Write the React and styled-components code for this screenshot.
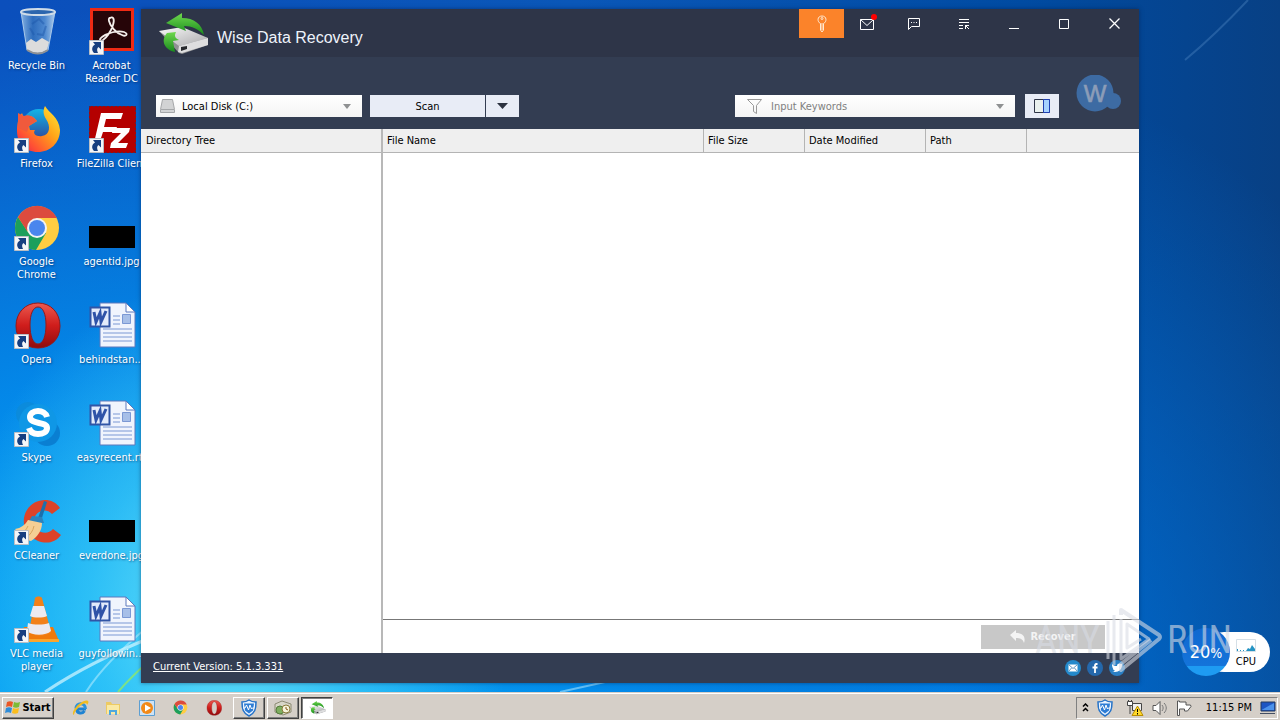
import React from 'react';
import styled, { createGlobalStyle, css } from 'styled-components';

const GlobalStyle = createGlobalStyle`
  * {
    box-sizing: border-box;
  }

  body {
    margin: 0;
    font-family: 'DejaVu Sans Condensed', 'DejaVu Sans', sans-serif;
    font-size: 11px;
    line-height: 13px;
    color: #000;
  }

  button, input, select {
    font: inherit;
    color: inherit;
    margin: 0;
    padding: 0;
    border: 0;
    border-radius: 0;
  }

  svg {
    display: block;
    flex-shrink: 0;
  }
`;

/* ---------- desktop icons ---------- */

const RecycleBin = () => (
  <svg width="48" height="48" viewBox="0 0 48 48">
    <defs>
      <linearGradient id="bin" x1="0" x2="1">
        <stop offset="0" stopColor="#9cc4ea" stopOpacity=".85" />
        <stop offset=".35" stopColor="#3c78bd" stopOpacity=".7" />
        <stop offset=".7" stopColor="#6aa0d8" stopOpacity=".7" />
        <stop offset="1" stopColor="#c3dcf2" stopOpacity=".9" />
      </linearGradient>
    </defs>
    <path d="M8 4 L14 42 Q25 49 35 42 L42 4 Z" fill="url(#bin)" stroke="#a9c9ea" />
    <path d="M13 35 L18 31 23 34 29 30 36 34 34 42 Q25 48 14 42 Z" fill="#dcdcdc" />
    <path d="M14 42 Q25 49 35 42" fill="none" stroke="#8d9094" strokeWidth="2" />
    <ellipse cx="25" cy="4" rx="17" ry="3" fill="#2c66ae" stroke="#cfdce8" strokeWidth="2" />
    <path d="M19 16 l7 -5 5 5 M33 18 l-3 9 -6 -1 M21 27 l-4 -7" fill="none" stroke="#1c56a8" strokeWidth="2" opacity=".45" />
  </svg>
);

const Acrobat = () => (
  <svg width="48" height="48" viewBox="0 0 48 48">
    <path d="M2 0h44v43H2z" fill="#ef2a14" />
    <path d="M5 3h38v37H5z" fill="#260508" />
    <path d="M22 10c3-2 5 1 3 7-2 7-7 13-10 15-4 2-4-1-1-3 5-4 16-7 22-5 5 2 2 5-2 3-6-2-12-9-13-14-.5-2 0-3 1-3z" fill="none" stroke="#f5efec" strokeWidth="1.8" />
  </svg>
);

const Firefox = () => (
  <svg width="48" height="48" viewBox="0 0 48 48">
    <defs>
      <linearGradient id="foxTail" x1="1" y1="0" x2="0" y2="1">
        <stop offset="0" stopColor="#ffef3a" />
        <stop offset=".4" stopColor="#ffa518" />
        <stop offset=".75" stopColor="#ff5034" />
        <stop offset="1" stopColor="#e01b50" />
      </linearGradient>
      <linearGradient id="foxGlobe" x1="0" y1="0" x2="0" y2="1">
        <stop offset="0" stopColor="#12b5e8" />
        <stop offset="1" stopColor="#303c96" />
      </linearGradient>
    </defs>
    <circle cx="26" cy="20" r="17" fill="url(#foxGlobe)" />
    <path d="M32 0C36 7 46 11 47 24 47 37 37 46 25 46 12 46 4 37 4 25 4 18 5 12 9 7L11 12C15 9 19 10 21 12L24 15 16 20 17 24 22 24C19 28 24 31 29 30 37 29 38 20 33 13 30 8 30 4 32 0Z" fill="url(#foxTail)" />
    <path d="M5 7L11 10C15 8 19 10 21 12L24 15 16 20 14 26 5 22Z" fill="#f05a3c" />
  </svg>
);

const FileZilla = () => (
  <svg width="48" height="48" viewBox="0 0 48 48">
    <path d="M1 0h47v47H1z" fill="#b40000" />
    <path d="M1 .5h47M1 46.5h47M1.500 0v47M47.500 0v47" stroke="#5b2440" strokeWidth="1" strokeDasharray="2 2" />
    <path d="M13 7h22l-2 6H18l-2 8h13l-2 5H15l-5 15H5z" fill="#fff" />
    <path d="M25 22h17l-1 4-11 11h10l-2 5H22l1-5 10-10h-9z" fill="#fff" />
  </svg>
);

const ChromeArt = ({ size = 48 }) => (
  <svg width={size} height={size} viewBox="1 0 48 48">
    <circle cx="25" cy="24" r="22" fill="#ffcd42" />
    <path d="M6 13 A22 22 0 0 0 24 46 L34 29 L25 24 L16 28 Z" fill="#1c9f5c" />
    <path d="M6 13 A22 22 0 0 1 45 14 L25 14 L15 27 Z" fill="#dc4b3e" />
    <circle cx="25" cy="24" r="10" fill="#f3f3f3" />
    <circle cx="25" cy="24" r="8" fill="#4a86ee" />
  </svg>
);

const OperaArt = ({ size = 48 }) => (
  <svg width={size} height={size} viewBox="0 0 48 48">
    <defs>
      <linearGradient id="opera" x1="0" y1="0" x2="0" y2="1">
        <stop offset="0" stopColor="#ec5a50" />
        <stop offset=".5" stopColor="#cf1d1b" />
        <stop offset="1" stopColor="#8e0c0e" />
      </linearGradient>
    </defs>
    <path fillRule="evenodd" d="M25 1C12 1 3 11 3 24s9 22 22 22 22-9 22-22S38 1 25 1zM25 5c5 0 8 7 8 18s-3 19-8 19-8-8-8-19 3-18 8-18z" fill="url(#opera)" stroke="#93191b" />
  </svg>
);

const Skype = () => (
  <svg width="48" height="48" viewBox="0 0 48 48">
    <circle cx="15" cy="14" r="12" fill="#0b8bdc" />
    <circle cx="34" cy="33" r="13" fill="#0a7fd2" />
    <circle cx="25" cy="23" r="19" fill="#0f97e6" />
    <path d="M34 17c-1-4-5-6-9-6-5 0-8 3-8 6 0 8 17 4 17 11 0 4-4 6-9 6s-8-3-9-6" fill="none" stroke="#fff" strokeWidth="6" />
  </svg>
);

const CCleaner = () => (
  <svg width="48" height="48" viewBox="0 0 48 48">
    <path d="M47 10C38-4 14 1 11 20c-3 20 25 34 37 17l-8-6c-7 8-20 2-19-9 1-9 12-13 18-6z" fill="#dc4329" />
    <path d="M31 3l3 1-6 19h-4z" fill="#1b70ad" />
    <path d="M19 18l10 1 2 6-16 0z" fill="#2b83bd" />
    <path d="M15 22l14 3c0 8-5 14-11 18-6-1-11-6-16-12 6-1 10-4 13-9z" fill="#f5cf94" />
    <path d="M15 28c-2 4-4 7-8 8M21 28c-1 5-4 9-8 12" stroke="#d9a55d" fill="none" />
  </svg>
);

const Vlc = () => (
  <svg width="48" height="48" viewBox="0 0 48 48">
    <path d="M11 31h29l6 14H6z" fill="#f07a0c" />
    <path d="M6 43h40v3H6z" fill="#fba52c" />
    <path d="M22 2c1-2 6-2 7 0l9 34c-4 5-18 5-22 0z" fill="#f2811a" />
    <path d="M20 10h11l3 10c-4 2-13 2-17 0zM15 27c6 2 15 2 21 0l2 8c-5 5-19 5-24 0z" fill="#eceaf0" />
  </svg>
);

const WordDoc = () => (
  <svg width="48" height="48" viewBox="0 0 48 48">
    <path d="M12 1h26l9 9v35H12z" fill="#f0f4fd" stroke="#5c79bd" />
    <path d="M38 1v9h9z" fill="#fff" stroke="#5c79bd" />
    <path d="M15 27h29M15 31h29M15 35h29M15 39h29M25 14h7M25 18h7M25 22h7" stroke="#7b98d4" />
    <path d="M34.500 12.500h8v9h-8z" fill="#a7bfe8" stroke="#7b98d4" />
    <path d="M2.500 5.500h19v19h-19z" fill="#e3ebfb" stroke="#3155a6" strokeWidth="2" />
    <path d="M6 10l2 10 4-9 1 9 5-11" fill="none" stroke="#2f53a8" strokeWidth="3" />
  </svg>
);

const Thumbnail = styled.div`
  width: 46px;
  height: 22px;
  margin: 22px 0 4px;
  background: #000;
`;

const ShortcutArrow = () => (
  <svg width="15" height="15" viewBox="0 0 15 15">
    <path d="M.5.5h14v14H.5z" fill="#f4f6f8" stroke="#b9bec5" />
    <path d="M12 2v7.500L9.500 7C8 8 7.500 10 9 13H5C2 10 3 6 6 4.500L4 2z" fill="#173f80" />
  </svg>
);

/* ---------- app and taskbar drawings ---------- */

const DriveLogo = ({ width = 52, height = 44 }) => (
  <svg width={width} height={height} viewBox="0 0 52 44">
    <defs>
      <linearGradient id="drive" x1="0" y1="0" x2="1" y2="1">
        <stop offset="0" stopColor="#fafafa" />
        <stop offset="1" stopColor="#a9a9ab" />
      </linearGradient>
      <linearGradient id="arrow" x1="0" y1="0" x2="0" y2="1">
        <stop offset="0" stopColor="#6fd84e" />
        <stop offset="1" stopColor="#178a1c" />
      </linearGradient>
    </defs>
    <path d="M1 20L21 42 24 43 50 34 50 27z" fill="#8f9093" />
    <path d="M1 20L24 16 50 27 21 35z" fill="url(#drive)" />
    <path d="M21 35L50 27 50 34 24 42 20 41z" fill="#dededf" />
    <path d="M23 36l6-1v3l-6 2z" fill="#26282c" />
    <path d="M8 12L24 2v5c12 0 20 6 22 17-6-6-12-9-20-9l2 5z" fill="url(#arrow)" />
    <path d="M9 22l9-1c-2 4-1 6 3 8l-6 1 2 11C7 39 2 30 9 22z" fill="url(#arrow)" />
  </svg>
);

const ShieldArt = () => (
  <svg width="16" height="18" viewBox="0 0 16 18">
    <path d="M8 1c2 1.500 4 2 7 2 0 7-1 11-7 14C2 14 1 10 1 3c3 0 5-.5 7-2z" fill="#e9f3ff" stroke="#2472c8" strokeWidth="1.500" />
    <path d="M3 4.500h10l-1 7-4 3-4-3z" fill="#2d7cd4" />
    <path d="M2 9h2l1.500-3 2 5 1.500-5 1.500 4 1-1h2" fill="none" stroke="#fff" />
  </svg>
);

const StartFlag = () => (
  <svg width="16" height="16" viewBox="0 0 16 16">
    <path d="M2 2c2-1 4-1 6 0L7 7C5 6 3 6 1 7z" fill="#ea5624" />
    <path d="M9 2c2 1 4 1 6 0l-1 5c-2 1-4 1-6 0z" fill="#7dbb35" />
    <path d="M1 8c2-1 4-1 6 0l-1 5c-2-1-4-1-6 0z" fill="#2f8cd8" />
    <path d="M8 8c2 1 4 1 6 0l-1 5c-2 1-4 1-6 0z" fill="#fbbd1d" />
  </svg>
);

const Explorer = () => (
  <svg width="18" height="18" viewBox="0 0 18 18">
    <path d="M15 10H5.500c.5 5 6 5 8 2" fill="none" stroke="#1f83d2" strokeWidth="3" />
    <path d="M5 9.500C5 3 14.500 3 14.500 10" fill="none" stroke="#2b93dc" strokeWidth="3" />
    <path d="M3 16C-2 14 11-1 17 2c1 1 0 3-1 4 0-3-4-2-8 2-4 4-5 7-5 8z" fill="#f0bc22" />
  </svg>
);

const Folder = () => (
  <svg width="16" height="16" viewBox="0 0 16 16">
    <path d="M1 2h5l1 2h8v10H1z" fill="#edca62" />
    <path d="M2 5h12v9H2z" fill="#fae9a4" />
    <path d="M4 15v-5h8v5h-2v-3H6v3z" fill="#4fa8dd" />
  </svg>
);

const MediaPlayer = () => (
  <svg width="16" height="16" viewBox="0 0 16 16">
    <path d="M.5.5h15v15H.5z" fill="#cfe3f5" stroke="#5d9fd2" />
    <circle cx="8" cy="8" r="6" fill="#f28918" />
    <path d="M6 4.500l6 3.500-6 3.500z" fill="#fff" />
  </svg>
);

const DiscArt = () => (
  <svg width="18" height="16" viewBox="0 0 18 16">
    <path d="M1 4l7-3 9 3v8l-8 3-8-3z" fill="#d8d6c8" stroke="#8c8a73" />
    <circle cx="6" cy="10" r="4" fill="#7fae5f" stroke="#557c3c" />
    <circle cx="12" cy="9" r="4" fill="#f6f4dc" stroke="#8b7a3c" />
    <path d="M12 7v2l2 1" stroke="#86571b" fill="none" />
  </svg>
);

const Network = () => (
  <svg width="18" height="18" viewBox="0 0 18 18">
    <path d="M6.500 4.500h9v7h-9zM8 14h6" fill="#efefef" stroke="#444" />
    <path d="M1.500 2.500h5v4h-5zM4 7v8M2.500 1v2M5.500 1v2" fill="#fff" stroke="#444" />
    <path d="M11.500 7l5.500 9.500H6z" fill="#ffd92b" stroke="#b98c00" />
    <path d="M11.500 10v3M11.500 14v1.500" stroke="#000" />
  </svg>
);

const Speaker = () => (
  <svg width="16" height="16" viewBox="0 0 16 16">
    <path d="M1 5.500h3l4-4v13l-4-4H1z" fill="#fff" stroke="#555" />
    <path d="M10 5c1.500 2 1.500 4 0 6M12 3c3 3 3 7 0 10" fill="none" stroke="#777" />
  </svg>
);

const ActionFlag = () => (
  <svg width="16" height="16" viewBox="0 0 16 16">
    <path d="M1.500 1v14.500h2V9h5v2h3L15 6.500 14.500 5H10V2H3.500V1z" fill="#fff" stroke="#555" />
  </svg>
);

const ShowDesktop = () => (
  <svg width="16" height="14" viewBox="0 0 16 14">
    <path d="M1 1h14v9H1z" fill="#1d55c2" stroke="#243a5e" />
    <path d="M1.500 9L14 2v7z" fill="#4c92ea" />
    <path d="M0 12.500h15" stroke="#444f63" />
  </svg>
);

const Caret = ({ color = '#8f9192', width = 8, height = 5 }) => (
  <svg width={width} height={height} viewBox="0 0 12 6" preserveAspectRatio="none">
    <path d="M0 0h12L6 6z" fill={color} />
  </svg>
);

/* ---------- layout ---------- */

const Screen = styled.div`
  display: flex;
  flex-direction: column;
  min-height: 100vh;
  overflow: hidden;
`;

const Desktop = styled.main`
  position: relative;
  flex: 1;
  background:
    radial-gradient(ellipse 22% 48% at 18% 88%, rgba(120, 232, 248, 0.9), rgba(70, 210, 248, 0.6) 50%, transparent),
    radial-gradient(ellipse 75% 95% at 14% 96%, #06b0fa, rgba(2, 145, 240, 0.85) 45%, transparent),
    radial-gradient(ellipse 42% 90% at 74% 100%, rgba(0, 124, 232, 0.8), transparent),
    linear-gradient(90deg, #0b4fbc, #0a57b8 45%, #004ba2 80%, #084084);
`;

const Streaks = styled.svg`
  position: absolute;
  inset: 0;
  width: 100%;
  height: 100%;
`;

const IconGrid = styled.ul`
  position: relative;
  display: grid;
  grid-template-columns: repeat(2, 73px);
  grid-auto-rows: 98px;
  column-gap: 2px;
  margin: 0;
  padding: 0;
  list-style: none;
`;

const Shortcut = styled.li`
  display: flex;
  flex-direction: column;
  align-items: center;
  gap: 3px;
  padding-top: 8px;
`;

const IconBox = styled.div`
  position: relative;
  display: flex;
  justify-content: center;
  width: 48px;
  height: 48px;
`;

const Badge = styled.span`
  position: absolute;
  left: 1px;
  bottom: 1px;
`;

const IconLabel = styled.span`
  color: #fff;
  text-align: center;
  white-space: pre;
  text-shadow: 1px 1px 2px rgba(0, 30, 80, 0.6);
`;

const AppWindow = styled.section`
  position: absolute;
  inset: 9px 141px;
  display: flex;
  flex-direction: column;
  background: #fff;
  box-shadow: 0 0 4px rgba(0, 20, 60, 0.5);
`;

const TitleBar = styled.header`
  display: flex;
  height: 48px;
  padding-left: 17px;
  background: #2e3548;
`;

const Brand = styled.div`
  display: flex;
  align-items: center;
  gap: 7px;
  margin-right: auto;
`;

const Title = styled.h1`
  margin: 0;
  padding-top: 10px;
  color: #eef3fb;
  font: 16px/20px 'Liberation Sans', Arial, sans-serif;
`;

const TitleButton = styled.button`
  display: grid;
  place-items: center;
  width: ${({ $narrow }) => ($narrow ? 45 : 50)}px;
  height: 29px;
  color: #fff;
  background: ${({ $accent }) => ($accent ? '#fb832a' : 'transparent')};
`;

const Toolbar = styled.div`
  display: flex;
  align-items: center;
  height: 72px;
  padding: 26px 18px 0 15px;
  background: #333d52;
`;

const Field = styled.label`
  display: flex;
  align-items: center;
  height: 22px;
  background: linear-gradient(#fff, #f4f4f4);

  select, input {
    flex: 1;
    min-width: 0;
    height: 22px;
    appearance: none;
    background: none;
    outline: 0;
  }
`;

const DiskField = styled(Field)`
  width: 206px;
  gap: 7px;
  padding: 0 11px 0 4px;
`;

const SearchField = styled(Field)`
  width: 280px;
  gap: 9px;
  margin: 0 10px 0 auto;
  padding: 0 11px 0 12px;

  input::placeholder {
    color: #808080;
    opacity: 1;
  }
`;

const SplitButton = styled.div`
  display: flex;
  gap: 1px;
  margin-left: 8px;
`;

const ToolButton = styled.button`
  display: grid;
  place-items: center;
  width: ${({ $width }) => $width}px;
  height: ${({ $tall }) => ($tall ? 24 : 22)}px;
  background: #e8ecf6;
`;

const Account = styled.button`
  display: flex;
  margin: -26px 0 0 17px;
  background: none;
`;

const Panes = styled.div`
  display: flex;
  flex: 1;
  min-height: 0;
`;

const headerCell = css`
  height: 24px;
  border-bottom: 1px solid #b4b4b4;
  background: #efefef;
  font: inherit;
  line-height: 23px;
  text-align: left;
`;

const TreePane = styled.aside`
  width: 242px;
  border-right: 2px solid #b8b8b8;
`;

const TreeHeading = styled.h2`
  ${headerCell}
  margin: 0;
  padding: 0 5px;
`;

const FilesPane = styled.div`
  display: flex;
  flex: 1;
  flex-direction: column;
  min-width: 0;
`;

const FileTable = styled.table`
  width: 100%;
  border-spacing: 0;
  table-layout: fixed;

  th {
    ${headerCell}
    padding: 0 4px;
    border-right: 1px solid #b4b4b4;
  }

  th:last-child {
    border-right: 0;
  }
`;

const ActionBar = styled.div`
  display: flex;
  align-items: center;
  justify-content: flex-end;
  height: 34px;
  margin-top: auto;
  padding-right: 34px;
  border-top: 1px solid #777;
`;

const RecoverButton = styled.button`
  display: flex;
  align-items: center;
  justify-content: center;
  gap: 4px;
  width: 124px;
  height: 24px;
  background: #c8c8c8;
  color: #f4f4f4;
  font-weight: bold;
`;

const StatusBar = styled.footer`
  display: flex;
  align-items: center;
  justify-content: space-between;
  height: 30px;
  padding: 0 14px 0 12px;
  background: #333d52;
`;

const VersionLink = styled.a`
  padding-bottom: 4px;
  color: #fff;
`;

const Socials = styled.nav`
  display: flex;
  gap: 6px;
`;

const CpuGadget = styled.div`
  position: absolute;
  right: 10px;
  bottom: 16px;
  display: flex;
  align-items: center;
  height: 48px;
`;

const CpuDial = styled.div`
  z-index: 1;
  display: grid;
  place-items: center;
  width: 48px;
  height: 48px;
  margin-right: -26px;
  border-radius: 50%;
  background: linear-gradient(#1168d0, #1474da 80%, #1e9bf2 80%);
  color: #fff;
  font: 18px/20px 'DejaVu Sans Condensed', 'DejaVu Sans', sans-serif;

  small {
    font-size: 14px;
  }
`;

const CpuLabel = styled.div`
  display: flex;
  flex-direction: column;
  align-items: flex-end;
  gap: 3px;
  width: 66px;
  height: 40px;
  padding: 7px 14px 0 0;
  border-radius: 20px;
  background: #fff;
`;

const Watermark = styled.div`
  position: absolute;
  z-index: 2;
  right: 48px;
  bottom: 18px;
  display: flex;
  align-items: center;
  gap: 5px;
  height: 68px;
  color: rgba(216, 220, 228, 0.6);
  font: 38px/48px 'Liberation Sans Narrow', 'Roboto Condensed', Lato, sans-serif;
  pointer-events: none;
`;

const Taskbar = styled.footer`
  display: flex;
  align-items: center;
  height: 28px;
  padding: 2px 2px 0;
  border-top: 1px solid #d5cfc8;
  box-shadow: inset 0 1px #fff;
  background: #d5cfc8;
`;

const TaskButton = styled.button`
  display: flex;
  align-items: center;
  justify-content: center;
  gap: 1px;
  width: ${({ $width }) => $width || 32}px;
  height: 22px;
  background: ${({ $active }) => ($active ? '#fff' : '#d5cfc8')};
  border: 1px solid;
  border-color: ${({ $active }) => ($active ? '#404040 #fff #fff #404040' : '#fff #404040 #404040 #fff')};
  box-shadow: ${({ $active }) => ($active ? 'inset 1px 1px #808080' : 'inset -1px -1px #808080')};
  font-weight: ${({ $bold }) => ($bold ? 'bold' : 'normal')};
`;

const QuickLaunch = styled.div`
  display: flex;
  justify-content: space-around;
  width: 168px;
  margin-left: 9px;
`;

const QuickButton = styled.button`
  display: grid;
  place-items: center;
  width: 20px;
  height: 22px;
  background: none;
`;

const TaskList = styled.div`
  display: flex;
  gap: 2px;
  margin-left: 2px;
`;

const Tray = styled.div`
  display: flex;
  align-items: center;
  justify-content: space-between;
  width: 202px;
  height: 22px;
  margin-left: auto;
  padding: 0 1px 0 5px;
  border: 1px solid;
  border-color: #808080 #fff #fff #808080;
`;

const TrayGroup = styled.div`
  display: flex;
  align-items: center;
  gap: 8px;
`;

const Clock = styled.time`
  white-space: nowrap;
`;

const shortcuts = [
  { label: 'Recycle Bin', icon: <RecycleBin /> },
  { label: 'Acrobat\nReader DC', icon: <Acrobat />, link: true },
  { label: 'Firefox', icon: <Firefox />, link: true },
  { label: 'FileZilla Client', icon: <FileZilla />, link: true },
  { label: 'Google\nChrome', icon: <ChromeArt />, link: true },
  { label: 'agentid.jpg', icon: <Thumbnail /> },
  { label: 'Opera', icon: <OperaArt />, link: true },
  { label: 'behindstan...', icon: <WordDoc /> },
  { label: 'Skype', icon: <Skype />, link: true },
  { label: 'easyrecent.rtf', icon: <WordDoc /> },
  { label: 'CCleaner', icon: <CCleaner />, link: true },
  { label: 'everdone.jpg', icon: <Thumbnail /> },
  { label: 'VLC media\nplayer', icon: <Vlc />, link: true },
  { label: 'guyfollowin...', icon: <WordDoc /> },
];

const columns = [
  { name: 'File Name', width: 321 },
  { name: 'File Size', width: 101 },
  { name: 'Date Modified', width: 121 },
  { name: 'Path', width: 101 },
];

const quickItems = [
  { name: 'Internet Explorer', icon: <Explorer /> },
  { name: 'Windows Explorer', icon: <Folder /> },
  { name: 'Media Player', icon: <MediaPlayer /> },
  { name: 'Chrome', icon: <ChromeArt size={15} /> },
  { name: 'Opera', icon: <OperaArt size={16} /> },
];

const WindowControls = () => (
  <>
    <TitleButton $narrow $accent aria-label="Register">
      <svg width="12" height="18" viewBox="0 0 12 18" fill="none" stroke="#ffe9d2">
        <path d="M4.500 8.500C1 7 1 1 6 1s5 6 1.500 7.500V15L6 17l-1.500-2z" />
        <circle cx="6" cy="3.500" r="1" />
        <path d="M6 8v7" />
      </svg>
    </TitleButton>
    <TitleButton $narrow aria-label="Messages">
      <svg width="21" height="20" viewBox="0 0 21 20" fill="none" stroke="#fff">
        <path d="M4.500 5.500h13v10h-13zM4.500 5.500l6.500 6 6.500-6" />
        <circle cx="18" cy="3" r="3" fill="#f00" stroke="none" />
      </svg>
    </TitleButton>
    <TitleButton aria-label="Feedback">
      <svg width="14" height="14" viewBox="0 0 14 14" fill="none" stroke="#fff">
        <path d="M1.500 1.500h11v8h-8l-3 3zM4 5.500h1M6.500 5.500h1M9 5.500h1" />
      </svg>
    </TitleButton>
    <TitleButton aria-label="Menu">
      <svg width="12" height="12" viewBox="0 0 12 12" fill="none" stroke="#fff">
        <path d="M1 1.500h10M1 4.500h10M1 7.500h4M1 10.500h4M7 7.500h4M7.500 7v4M7.500 7.500l3.500 3.500" />
      </svg>
    </TitleButton>
    <TitleButton aria-label="Minimize">
      <svg width="10" height="10" viewBox="0 0 10 10" stroke="#fff"><path d="M0 9.500h10" /></svg>
    </TitleButton>
    <TitleButton aria-label="Maximize">
      <svg width="10" height="10" viewBox="0 0 10 10" fill="none" stroke="#fff"><path d="M.5.5h9v9h-9z" /></svg>
    </TitleButton>
    <TitleButton aria-label="Close">
      <svg width="11" height="11" viewBox="0 0 11 11" stroke="#fff" strokeWidth="1.300"><path d="M.5.5l10 10M10.500.5l-10 10" /></svg>
    </TitleButton>
  </>
);

const RecoveryApp = () => (
  <AppWindow>
    <TitleBar>
      <Brand>
        <DriveLogo />
        <Title>Wise Data Recovery</Title>
      </Brand>
      <WindowControls />
    </TitleBar>
    <Toolbar>
      <DiskField>
        <svg width="15" height="14" viewBox="0 0 15 14">
          <path d="M2.500.5h10l2 10v3H.5v-3z" fill="#d2d3d4" stroke="#a5a7a9" />
          <path d="M1 10.500h13" stroke="#a5a7a9" />
        </svg>
        <select aria-label="Drive">
          <option>Local Disk (C:)</option>
        </select>
        <Caret />
      </DiskField>
      <SplitButton>
        <ToolButton $width={115}>Scan</ToolButton>
        <ToolButton $width={33} aria-label="Scan options"><Caret color="#2c3240" width={11} height={6} /></ToolButton>
      </SplitButton>
      <SearchField>
        <svg width="15" height="15" viewBox="0 0 15 15" fill="none" stroke="#999">
          <path d="M.5.5h14l-5 6v8l-3-2v-6z" />
        </svg>
        <input type="text" placeholder="Input Keywords" aria-label="Keywords" />
        <Caret />
      </SearchField>
      <ToolButton $width={34} $tall aria-label="Toggle preview">
        <svg width="16" height="14" viewBox="0 0 16 14">
          <path d="M.5.5h15v13H.5z" fill="#e9f0ee" stroke="#2e3548" />
          <path d="M9.500.5h6v13h-6z" fill="#a6d2ff" stroke="#1f3fb0" />
        </svg>
      </ToolButton>
      <Account aria-label="Account">
        <svg width="45" height="37" viewBox="0 0 45 37">
          <circle cx="19" cy="18" r="18.500" fill="#3d6ba3" />
          <circle cx="37" cy="26" r="8" fill="#3d6ba3" />
          <text x="19" y="27" textAnchor="middle" fill="#8c9db8" stroke="#8c9db8" strokeWidth=".6" fontFamily="Liberation Sans, sans-serif" fontSize="24">W</text>
        </svg>
      </Account>
    </Toolbar>
    <Panes>
      <TreePane>
        <TreeHeading>Directory Tree</TreeHeading>
      </TreePane>
      <FilesPane>
        <FileTable>
          <colgroup>
            {columns.map(({ name, width }) => <col key={ name } width={ width } />)}
            <col />
          </colgroup>
          <thead>
            <tr>
              {columns.map(({ name }) => <th key={ name } scope="col">{name}</th>)}
              <th aria-label="More" />
            </tr>
          </thead>
        </FileTable>
        <ActionBar>
          <RecoverButton disabled>
            <svg width="16" height="14" viewBox="0 0 16 14">
              <path d="M0 5l6-5v3c7 0 10 4 8 10-1-4-4-5-8-5v3z" fill="#f4f4f4" />
            </svg>
            Recover
          </RecoverButton>
        </ActionBar>
      </FilesPane>
    </Panes>
    <StatusBar>
      <VersionLink href="#version">Current Version: 5.1.3.331</VersionLink>
      <Socials>
        <a href="#mail" aria-label="Mail">
          <svg width="16" height="16" viewBox="0 0 16 16">
            <circle cx="8" cy="8" r="8" fill="#2389cb" />
            <path d="M3.500 4.500h9v7h-9z" fill="#fff" />
            <path d="M3.500 4.500l4.500 4 4.500-4M3.500 11.500l3-3.500M12.500 11.500l-3-3.500" fill="none" stroke="#5d95bf" />
          </svg>
        </a>
        <a href="#facebook" aria-label="Facebook">
          <svg width="16" height="16" viewBox="0 0 16 16">
            <circle cx="8" cy="8" r="8" fill="#2468ac" />
            <path d="M10.500 4H9.500C8 4 8 5 8 6v7M5.500 7.500h5" fill="none" stroke="#fff" strokeWidth="1.800" />
          </svg>
        </a>
        <a href="#twitter" aria-label="Twitter">
          <svg width="16" height="16" viewBox="0 0 16 16">
            <circle cx="8" cy="8" r="8" fill="#2a7fc4" />
            <path d="M3 4c2 2 3 2 5 2 0-3 3-3 4-2l1.500-.5L13 5c0 5-4 8-10 6.500 1 0 2 0 3-1-1 0-2-1-2-2C3 7 3 5 3 4z" fill="#fff" />
          </svg>
        </a>
      </Socials>
    </StatusBar>
  </AppWindow>
);

const App = () => (
  <Screen>
    <GlobalStyle />
    <Desktop>
      <Streaks viewBox="0 0 1280 692" preserveAspectRatio="none" aria-hidden="true" fill="none">
        <path d="M45 692Q90 662 150 638" stroke="#d5f6ff" strokeWidth="3" opacity=".7" />
        <path d="M86 692Q105 662 150 625" stroke="#c8f4ff" strokeWidth="2" opacity=".5" />
        <path d="M118 692Q130 678 150 660" stroke="#8fe86a" strokeWidth="2" opacity=".8" />
        <path d="M560 692L605 682" stroke="#a4e2ff" strokeWidth="2" opacity=".6" />
        <path d="M1185 60Q1215 35 1248 0" stroke="#5b93cc" strokeWidth="2" opacity=".35" />
      </Streaks>
      <IconGrid>
        {shortcuts.map(({ label, icon, link }) => (
          <Shortcut key={ label }>
            <IconBox>
              {icon}
              {link && <Badge><ShortcutArrow /></Badge>}
            </IconBox>
            <IconLabel>{label}</IconLabel>
          </Shortcut>
        ))}
      </IconGrid>
      <RecoveryApp />
      <CpuGadget>
        <CpuDial><span>20<small>%</small></span></CpuDial>
        <CpuLabel>
          <svg width="20" height="13" viewBox="0 0 20 13">
            <path d="M.5.5h19v12H.5z" fill="#fff" stroke="#d5dfe6" />
            <path d="M1 12v-2h1v2zM4 12v-1h1v1zM7 12v-1h1v1zM10 12l2-3 2 1 2-4 3 4v2z" fill="#2494c4" />
          </svg>
          CPU
        </CpuLabel>
      </CpuGadget>
      <Watermark>
        <span>ANY</span>
        <svg width="57" height="66" viewBox="0 0 57 66" fill="none" stroke="#d8dce4" strokeOpacity=".6" strokeWidth="3" strokeLinejoin="round">
          <path d="M3 14v38M9 8v50" />
          <path d="M16 8V3L54 28Q56 30 54 32L16 63V57L46 33" strokeWidth="4" />
          <path d="M16 12v40L44 32 22 17v24l14-9" />
        </svg>
        <span>RUN</span>
      </Watermark>
    </Desktop>
    <Taskbar>
      <TaskButton $width={52} $bold><StartFlag />Start</TaskButton>
      <QuickLaunch>
        {quickItems.map(({ name, icon }) => <QuickButton key={ name } aria-label={ name }>{icon}</QuickButton>)}
      </QuickLaunch>
      <TaskList>
        <TaskButton aria-label="Security"><ShieldArt /></TaskButton>
        <TaskButton aria-label="Installer"><DiscArt /></TaskButton>
        <TaskButton $active aria-label="Wise Data Recovery"><DriveLogo width={17} height={15} /></TaskButton>
      </TaskList>
      <Tray>
        <TrayGroup>
          <svg width="7" height="9" viewBox="0 0 7 9" fill="none" stroke="#000" strokeWidth="1.500">
            <path d="M1 3.500L3.500 1 6 3.500M1 8l2.500-2.500L6 8" />
          </svg>
          <ShieldArt />
        </TrayGroup>
        <TrayGroup>
          <Network />
          <Speaker />
          <ActionFlag />
        </TrayGroup>
        <TrayGroup>
          <Clock>11:15 PM</Clock>
          <ShowDesktop />
        </TrayGroup>
      </Tray>
    </Taskbar>
  </Screen>
);

export default App;
